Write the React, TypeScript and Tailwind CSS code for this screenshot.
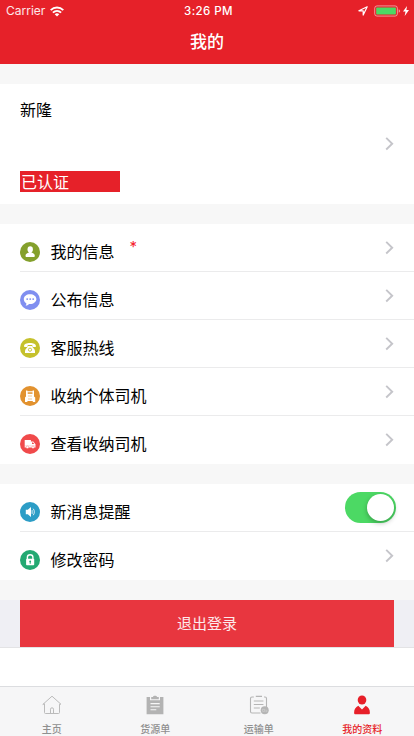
import type { ReactNode } from "react";

const infoRows = [
  { title: "我的信息", color: "bg-[#84a02c]", icon: <UserGlyph />, badge: true },
  { title: "公布信息", color: "bg-[#808ff0]", icon: <ChatGlyph /> },
  { title: "客服热线", color: "bg-[#c5c12c]", icon: <PhoneGlyph /> },
  { title: "收纳个体司机", color: "bg-[#e2922f]", icon: <DriverGlyph /> },
  { title: "查看收纳司机", color: "bg-[#f04a4b]", icon: <TruckGlyph /> },
];

const tabs = [
  { title: "主页", icon: <HomeIcon /> },
  { title: "货源单", icon: <ClipboardIcon /> },
  { title: "运输单", icon: <OrderIcon /> },
  { title: "我的资料", icon: <ProfileIcon />, active: true },
];

function UserGlyph() {
  return (
    <svg viewBox="0 0 20 20" className="size-5" fill="#fff">
      <ellipse cx="10.200" cy="7.400" rx="2.700" ry="3.100" />
      <path d="M9 9.500h2.400v1.100c2 .4 3.400 1.700 3.400 3.100 0 .9-.4 1.300-1.200 1.300H6.700c-.8 0-1.200-.4-1.200-1.300 0-1.400 1.500-2.700 3.500-3.100z" />
    </svg>
  );
}

function ChatGlyph() {
  return (
    <svg viewBox="0 0 20 20" className="size-5">
      <path d="M10 4.200c3.600 0 6.400 2.100 6.400 4.900 0 2.900-2.800 5-6.400 5l-1 0c-.9 1.100-2 1.700-3.500 1.700.7-.7 1-1.500.8-2.500C4.700 12.400 3.800 10.900 3.800 9.100c0-2.800 2.700-4.900 6.200-4.900z" fill="#fff" />
      <g fill="#808ff0">
        <circle cx="7.200" cy="9.100" r=".95" />
        <circle cx="10.200" cy="9.100" r=".95" />
        <circle cx="13.200" cy="9.100" r=".95" />
      </g>
    </svg>
  );
}

function PhoneGlyph() {
  return (
    <svg viewBox="0 0 20 20" className="size-5">
      <path d="M4 8.200c0-2.200 2.600-3.300 6-3.300s6 1.100 6 3.300c0 .6-.3.8-.8.8h-2c-.7 0-.9-.3-.9-1V7.100H7.700V8c0 .7-.2 1-.9 1h-2c-.5 0-.8-.2-.8-.8z" fill="#fff" />
      <path d="M8.200 8h3.600c.3 1.400 3.200 3 3.200 5v1.900H5V13c0-2 2.900-3.600 3.200-5z" fill="#fff" />
      <circle cx="10" cy="11.700" r="1.600" fill="#fff" stroke="#c5c12c" strokeWidth=".9" />
    </svg>
  );
}

function DriverGlyph() {
  return (
    <svg viewBox="0 0 20 20" className="size-5">
      <path d="M6 4.600h1.400v.7h5.200v-.7H14v5.800l1.200 1v4.500h-2.400v-.8H7.400v.8H5v-4.500l1-1z" fill="#fff" />
      <path d="M7.700 6.300h4.800v1.500H7.700z" fill="#e2922f" />
      <path d="M8 10h4M8 13h4" stroke="#e2922f" strokeWidth=".5" />
    </svg>
  );
}

function TruckGlyph() {
  return (
    <svg viewBox="0 0 20 20" className="size-5">
      <path d="M4.700 6h6.200v1.500h2.400l2.200 2.700v3.300H4.700z" fill="#fff" />
      <path d="M12 8.400h1.100l1.200 1.700H12z" fill="#f04a4b" />
      <path d="M4.700 11.900h10.800" stroke="#f04a4b" strokeWidth=".25" />
      <circle cx="7.400" cy="13.300" r="1.300" fill="#fff" stroke="#f04a4b" strokeWidth=".35" />
      <circle cx="13" cy="13.300" r="1.300" fill="#fff" stroke="#f04a4b" strokeWidth=".35" />
    </svg>
  );
}

function SoundGlyph() {
  return (
    <svg viewBox="0 0 20 20" className="size-5">
      <path d="M5.800 7.700h2l3.200-2.700v10l-3.200-2.700h-2z" fill="#fff" />
      <path d="M12.100 8.100v3.800" stroke="#fff" strokeWidth=".8" />
      <path d="M13.200 6.700c1.500 1.500 1.500 5 0 6.500" fill="none" stroke="#fff" strokeWidth=".8" />
    </svg>
  );
}

function LockGlyph() {
  return (
    <svg viewBox="0 0 20 20" className="size-5">
      <path d="M7.400 9V7.200c0-3.200 5.500-3.200 5.500 0V9" fill="none" stroke="#fff" strokeWidth="1.400" />
      <rect x="6.100" y="8.800" width="8.100" height="6.500" rx=".8" fill="#fff" />
      <circle cx="10.200" cy="11.300" r=".9" fill="#23a972" />
      <path d="M10.200 11.300v2.500" stroke="#23a972" />
    </svg>
  );
}

function HomeIcon() {
  return (
    <svg viewBox="0 0 20 20" className="size-5" fill="none" stroke="#bbb" strokeWidth="1" strokeLinejoin="round" strokeLinecap="round">
      <path d="M1.100 9.200 10 1.200l8.900 8H17.500v8.300q0 1-1 1h-13q-1 0-1-1V9.200z" />
      <path d="M8.500 18.500v-4.300q0-1.400 1.500-1.400t1.500 1.400v4.300" />
    </svg>
  );
}

function ClipboardIcon() {
  return (
    <svg viewBox="0 0 20 20" className="size-5">
      <path d="M1.600 2H5v3.200h10V2h3.400v17.200H1.600z" fill="#b3b3b3" />
      <path d="M6.200 4.200V2.100h1.700C8.200.3 11.800.3 12.100 2.100h1.700v2.100z" fill="#b3b3b3" />
      <path d="M5.500 8.600h9.200M5.500 11.700h9.200M5.500 14.800h5.800" stroke="#f7f7f7" strokeWidth="1.100" />
    </svg>
  );
}

function OrderIcon() {
  return (
    <svg viewBox="0 0 20 20" className="size-5" fill="none" stroke="#b5b5b5" strokeWidth="1.100">
      <path d="M4.800 2H3Q1.500 2 1.500 3.500v13Q1.500 18 3 18h8.500M15 2h1q1.500 0 1.500 1.500v9M6.800 1.400h6.200M4.800 6h9.600M4.800 9.500h9.600M4.800 13h6" />
      <circle cx="15.700" cy="15.300" r="4" fill="#b5b5b5" stroke="none" />
      <path d="M13.400 14.300h2.300v2h-2.300zM16.500 15h1l.6.800v.5h-1.600" stroke="#e4e4e4" strokeWidth=".4" />
    </svg>
  );
}

function ProfileIcon() {
  return (
    <svg viewBox="0 0 20 20" className="size-5" fill="#e71f29">
      <ellipse cx="10" cy="5" rx="4.300" ry="4.600" />
      <path d="M6.300 10.800 10 14.500l3.700-3.700c2.700 1.300 4.200 3.600 4.200 6.900 0 1.100-.5 1.500-1.600 1.500H3.700c-1.100 0-1.600-.4-1.600-1.500 0-3.300 1.500-5.600 4.200-6.900z" />
    </svg>
  );
}

function Chevron() {
  return (
    <svg viewBox="0 0 9 14" className="h-3.5 w-[9px]" fill="none" stroke="#c5c5ca" strokeWidth="1.900">
      <path d="m1.200 .9 6 5.800-6 5.800" />
    </svg>
  );
}

function Row({
  title,
  color,
  icon,
  badge,
  last,
  children,
}: {
  title: string;
  color: string;
  icon: ReactNode;
  badge?: boolean;
  last?: boolean;
  children?: ReactNode;
}) {
  return (
    <div className={`ml-5 flex h-12 items-center pr-5 ${last ? "pb-px" : "border-b border-[#ebebec]"}`}>
      <span className={`mt-2 size-5 rounded-full ${color}`}>{icon}</span>
      <span className="mt-[9px] ml-[10.500px] text-base leading-6">{title}</span>
      {badge && <span className="mt-[-2px] ml-[15px] text-[15px] leading-6 text-[#f5222d]">*</span>}
      <div className="ml-auto">{children ?? <Chevron />}</div>
    </div>
  );
}

export default function App() {
  return (
    <main className="flex h-[736px] w-full flex-col overflow-hidden bg-white font-[Inter,'Noto_Sans_CJK_SC',sans-serif] text-black">
      <header className="h-16 shrink-0 bg-[#e62129] text-white">
        <div className="grid h-5 grid-cols-3 items-center pt-0.5 text-xs">
          <div className="flex items-center gap-[5px] pl-1.5">
            <span className="text-white/90">Carrier</span>
            <svg viewBox="0 0 14 11" className="h-[11px] w-3.5" fill="none" stroke="#fff" strokeWidth="1.900">
              <path d="M.7 4.100c3.600-3.500 9-3.500 12.600 0M2.900 6.600c2.400-2.300 5.800-2.300 8.200 0" />
              <path d="m4.700 8.200q2.300-1.900 4.600 0L7 10.600z" fill="#fff" stroke="none" />
            </svg>
          </div>
          <span className="pt-px pl-[3px] text-center text-[11.500px] font-medium tracking-[0.4px]">3:26 PM</span>
          <div className="flex items-center justify-end pr-[5px]">
            <svg viewBox="0 0 10 10" className="mr-1.5 size-2.5" fill="none" stroke="#fff" strokeWidth="1.200" strokeLinejoin="round">
              <path d="M9.200.8.9 4.800h4.300v4.300z" />
            </svg>
            <svg viewBox="0 0 27 12" className="mr-0.5 h-3 w-[27px]">
              <rect x=".7" y=".9" width="22.700" height="10.200" rx="2.300" fill="none" stroke="#fff" strokeOpacity=".5" />
              <rect x="2.200" y="2.500" width="19.700" height="7" rx=".7" fill="#4cd964" />
              <path d="M24.700 4.300q1.500.4 1.500 1.700t-1.500 1.700z" fill="#fff" fillOpacity=".5" />
            </svg>
            <svg viewBox="0 0 6 10" className="h-2.5 w-1.5" fill="#fff">
              <path d="M4 0 0 5.600h2.500L1.700 10 6 4.100H3.400z" />
            </svg>
          </div>
        </div>
        <h1 className="pt-[9px] text-center text-[17px] leading-[27px] font-medium">我的</h1>
      </header>

      <div className="h-5 shrink-0 bg-[#f7f7f7]" />

      <section className="flex h-[120px] shrink-0 items-center justify-between px-5">
        <div className="flex h-full flex-col justify-between pt-3.5 pb-3">
          <span className="text-base leading-6">新隆</span>
          <span className="h-[21px] w-[100px] bg-[#e62129] pl-px text-base leading-[22px] text-white">已认证</span>
        </div>
        <Chevron />
      </section>

      <div className="h-5 shrink-0 bg-[#f7f7f7]" />

      <section className="shrink-0">
        {infoRows.map((row, i) => (
          <Row key={row.title} {...row} last={i === infoRows.length - 1} />
        ))}
      </section>

      <div className="h-5 shrink-0 bg-[#f7f7f7]" />

      <section className="shrink-0">
        <Row title="新消息提醒" color="bg-[#2c9dc6]" icon={<SoundGlyph />}>
          <div className="-mr-0.5 flex h-[31px] w-[51px] justify-end rounded-full bg-[#4cd964] p-0.5">
            <div className="size-[27px] rounded-full bg-white shadow-[0_2px_5px_rgba(0,0,0,0.28)]" />
          </div>
        </Row>
        <Row title="修改密码" color="bg-[#23a972]" icon={<LockGlyph />} last />
      </section>

      <div className="h-5 shrink-0 bg-[#f7f7f7]" />

      <div className="h-12 shrink-0 border-b border-[#e3e3e5] bg-[#efeff4] px-5">
        <button className="block h-[47px] w-full bg-[#e8363f] pt-0.5 text-center text-[15px] text-white/90">退出登录</button>
      </div>

      <nav className="mt-auto grid h-[50px] shrink-0 grid-cols-4 border-t border-[#dcdde0] bg-[#f6f6f7]">
        {tabs.map((tab) => (
          <div key={tab.title} className="flex flex-col items-center pt-2">
            {tab.icon}
            <span className={`mt-[7px] text-[10px] leading-[14px] font-medium ${tab.active ? "text-[#e71f29]" : "text-[#8f8f8f]"}`}>
              {tab.title}
            </span>
          </div>
        ))}
      </nav>
    </main>
  );
}
